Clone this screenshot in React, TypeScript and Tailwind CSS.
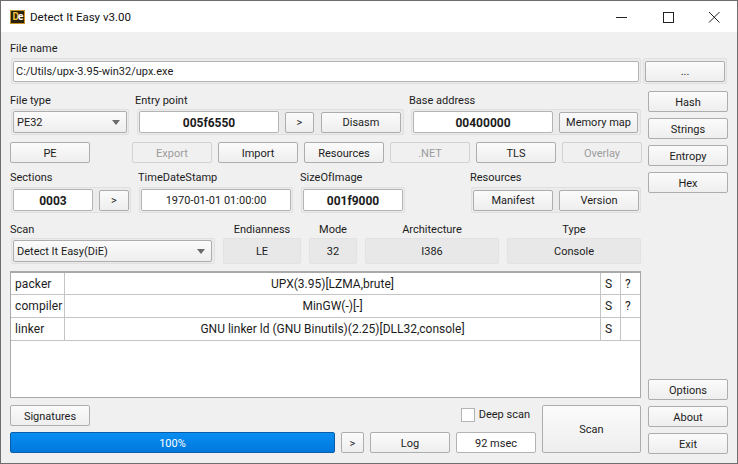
const btn =
  "flex items-center justify-center h-[21px] shrink-0 pt-[2px] rounded-[2px] border border-[#adadad] bg-gradient-to-b from-[#fbfbfb] to-[#eeeeee] text-[#1c1c1c]";
const btnOff =
  "flex items-center justify-center h-[21px] shrink-0 pt-[2px] rounded-[2px] border border-[#d2d2d2] bg-[#f0f0f0] text-[#9c9c9c]";
const frame = "flex items-center h-[26px] shrink-0 px-px rounded-[2px] border border-[#e0e0e0] bg-[#ebebeb]";
const edit = "flex items-center h-[22px] shrink-0 pt-[2px] rounded-[2px] border border-[#b4b4b4] bg-white text-[#1c1c1c]";
const info = "flex items-center justify-center h-[26px] shrink-0 pt-[2px] rounded-[2px] border border-[#e2e2e2] bg-[#e8e8e8] text-[#1c1c1c]";
const label = "h-[14px] pt-px";

const Combo = ({ text, className }: { text: string; className: string }) => (
  <div className={`${btn} !justify-between !h-[22px] pl-[3px] pr-[6px] ${className}`}>
    <span>{text}</span>
    <svg width="8" height="5" viewBox="0 0 8 5" className="-mt-[2px]">
      <path d="M0 0h8L4 5z" fill="#6a6a6a" />
    </svg>
  </div>
);

const rows = [
  { kind: "packer", name: "UPX(3.95)[LZMA,brute]", q: "?" },
  { kind: "compiler", name: "MinGW(-)[-]", q: "?" },
  { kind: "linker", name: "GNU linker ld (GNU Binutils)(2.25)[DLL32,console]", q: "" },
];

export default function App() {
  return (
    <div className="w-[738px] h-[464px] flex flex-col overflow-hidden border border-[#6e6e6e] bg-[#f0f0f0] text-[11px] leading-[14px] font-['Roboto',sans-serif] text-[#1c1c1c]">
      <div className="flex items-center h-[31px] shrink-0 bg-white pl-[9px]">
        <div className="flex items-center justify-center w-[15px] h-[14px] border border-[#c8922a] bg-[#2a2208]">
          <span className="text-[10px] leading-[12px] font-bold tracking-[-1px] text-[#f0c040]">
            D<span className="text-white">e</span>
          </span>
        </div>
        <span className="ml-[5px] text-[11.5px] text-[#111111]">Detect It Easy v3.00</span>
        <div className="ml-auto flex items-center">
          <svg width="12" height="12" viewBox="0 0 12 12" className="mr-[35px]">
            <path d="M1 6.5h11" stroke="#222222" />
          </svg>
          <svg width="12" height="12" viewBox="0 0 12 12" className="mr-[34px]">
            <rect x="1.5" y="1.5" width="10" height="10" fill="none" stroke="#222222" />
          </svg>
          <svg width="12" height="12" viewBox="0 0 12 12" className="mr-[17px]">
            <path d="M1 1l10.5 10.5M11.5 1L1 11.5" stroke="#222222" />
          </svg>
        </div>
      </div>

      <div className="flex flex-col pl-[9px] pt-[9px]">
        <div className={label}>File name</div>
        <div className="flex ml-px mt-[3px]">
          <div className={`${frame} w-[630px]`}>
            <div className={`${edit} !h-[21px] w-[626px] pl-[2px]`}>C:/Utils/upx-3.95-win32/upx.exe</div>
          </div>
          <div className={`${frame} ml-[2px] w-[84px]`}>
            <div className={`${btn} w-[80px]`}>...</div>
          </div>
        </div>

        <div className="flex mt-[8px]">
          <div className="flex flex-col w-[632px] pt-px">
            <div className="flex">
              <div className="flex flex-col ml-px">
                <div className={`${label} -ml-px`}>File type</div>
                <div className={`${frame} mt-[2px] w-[118px]`}>
                  <Combo text="PE32" className="w-[114px]" />
                </div>
              </div>
              <div className="flex flex-col ml-[8px]">
                <div className={`${label} -ml-[2px]`}>Entry point</div>
                <div className={`${frame} mt-[2px] w-[267px]`}>
                  <div className={`${edit} justify-center w-[140px] text-[12px] font-bold`}>005f6550</div>
                  <div className={`${btn} ml-[6px] w-[29px]`}>&gt;</div>
                  <div className={`${btn} ml-[7px] w-[80px]`}>Disasm</div>
                </div>
              </div>
              <div className="flex flex-col ml-[7px]">
                <div className={`${label} -ml-[2px]`}>Base address</div>
                <div className={`${frame} mt-[2px] w-[230px]`}>
                  <div className={`${edit} justify-center w-[140px] text-[12px] font-bold`}>00400000</div>
                  <div className={`${btn} ml-[6px] w-[79px]`}>Memory map</div>
                </div>
              </div>
            </div>

            <div className="flex mt-[7px]">
              <div className={`${btn} w-[80px]`}>PE</div>
              <div className={`${btnOff} ml-[42px] w-[80px]`}>Export</div>
              <div className={`${btn} ml-[6px] w-[80px]`}>Import</div>
              <div className={`${btn} ml-[6px] w-[80px]`}>Resources</div>
              <div className={`${btnOff} ml-[6px] w-[80px]`}>.NET</div>
              <div className={`${btn} ml-[6px] w-[80px]`}>TLS</div>
              <div className={`${btnOff} ml-[6px] w-[80px]`}>Overlay</div>
            </div>

            <div className="flex mt-[7px]">
              <div className="flex flex-col ml-px">
                <div className={`${label} -ml-px`}>Sections</div>
                <div className={`${frame} mt-[3px] w-[120px]`}>
                  <div className={`${edit} justify-center w-[80px] text-[12px] font-bold`}>0003</div>
                  <div className={`${btn} ml-[6px] w-[30px]`}>&gt;</div>
                </div>
              </div>
              <div className="flex flex-col ml-[8px]">
                <div className={`${label} -ml-px`}>TimeDateStamp</div>
                <div className={`${frame} mt-[3px] w-[154px]`}>
                  <div className={`${edit} justify-center w-[150px]`}>1970-01-01 01:00:00</div>
                </div>
              </div>
              <div className="flex flex-col ml-[8px]">
                <div className={`${label} -ml-px`}>SizeOfImage</div>
                <div className={`${frame} mt-[3px] w-[104px]`}>
                  <div className={`${edit} justify-center w-[100px] text-[12px] font-bold`}>001f9000</div>
                </div>
              </div>
              <div className="flex flex-col ml-[66px]">
                <div className={`${label} -ml-px`}>Resources</div>
                <div className={`${frame} mt-[3px] w-[170px]`}>
                  <div className={`${btn} w-[80px]`}>Manifest</div>
                  <div className={`${btn} ml-[6px] w-[80px]`}>Version</div>
                </div>
              </div>
            </div>

            <div className="flex mt-[9px]">
              <div className="flex flex-col ml-px">
                <div className={`${label} -ml-px`}>Scan</div>
                <div className={`${frame} mt-[2px] w-[204px]`}>
                  <Combo text="Detect It Easy(DiE)" className="w-[199px]" />
                </div>
              </div>
              <div className="flex flex-col ml-[8px] w-[78px]">
                <div className={`${label} text-center`}>Endianness</div>
                <div className={`${info} mt-[2px]`}>LE</div>
              </div>
              <div className="flex flex-col ml-[8px] w-[48px]">
                <div className={`${label} text-center`}>Mode</div>
                <div className={`${info} mt-[2px]`}>32</div>
              </div>
              <div className="flex flex-col ml-[8px] w-[134px]">
                <div className={`${label} text-center`}>Architecture</div>
                <div className={`${info} mt-[2px]`}>I386</div>
              </div>
              <div className="flex flex-col ml-[8px] w-[134px]">
                <div className={`${label} text-center`}>Type</div>
                <div className={`${info} mt-[2px]`}>Console</div>
              </div>
            </div>

            <div className="mt-[7px] h-[127px] w-[631px] border border-t-2 border-[#a9a9a9] bg-white">
              {rows.map((row) => (
                <div
                  key={row.kind}
                  className="grid grid-cols-[54px_536px_20px_1fr] h-[23px] border-b border-[#c4c4c4] first:h-[22px]"
                >
                  <div className="flex items-center pl-[4px] text-[12px] tracking-[0.1px] border-r border-[#c4c4c4]">
                    {row.kind}
                  </div>
                  <div className="flex items-center justify-center text-[12px] border-r border-[#c4c4c4]">{row.name}</div>
                  <div className="flex items-center pl-[4px] text-[12px] border-r border-[#c4c4c4]">S</div>
                  <div className="flex items-center pl-[4px] text-[12px]">{row.q}</div>
                </div>
              ))}
            </div>

            <div className="flex mt-[7px]">
              <div className="flex flex-col w-[526px]">
                <div className="flex items-start h-[27px]">
                  <div className={`${btn} w-[80px]`}>Signatures</div>
                  <div className="ml-auto flex items-center mt-[3px] mr-[6px]">
                    <div className="w-[14px] h-[14px] border border-[#b4b4b4] bg-white" />
                    <span className="ml-[4px]">Deep scan</span>
                  </div>
                </div>
                <div className="flex">
                  <div className="flex items-center justify-center w-[325px] h-[21px] pt-[2px] rounded-[2px] border border-[#0a5ea8] bg-gradient-to-b from-[#0a8df2] to-[#0078dc] text-white">
                    100%
                  </div>
                  <div className={`${btn} ml-[6px] w-[23px]`}>&gt;</div>
                  <div className={`${btn} ml-[6px] w-[80px]`}>Log</div>
                  <div className={`${edit} !h-[21px] justify-center ml-[6px] w-[80px]`}>92 msec</div>
                </div>
              </div>
              <div className={`${btn} !h-[48px] ml-[6px] w-[99px]`}>Scan</div>
            </div>
          </div>

          <div className="flex flex-col justify-between -mt-px ml-[6px] w-[80px] h-[363px]">
            <div className="flex flex-col gap-[6px]">
              <div className={`${btn} w-[80px]`}>Hash</div>
              <div className={`${btn} w-[80px]`}>Strings</div>
              <div className={`${btn} w-[80px]`}>Entropy</div>
              <div className={`${btn} w-[80px]`}>Hex</div>
            </div>
            <div className="flex flex-col gap-[6px]">
              <div className={`${btn} w-[80px]`}>Options</div>
              <div className={`${btn} w-[80px]`}>About</div>
              <div className={`${btn} w-[80px]`}>Exit</div>
            </div>
          </div>
        </div>
      </div>
    </div>
  );
}
